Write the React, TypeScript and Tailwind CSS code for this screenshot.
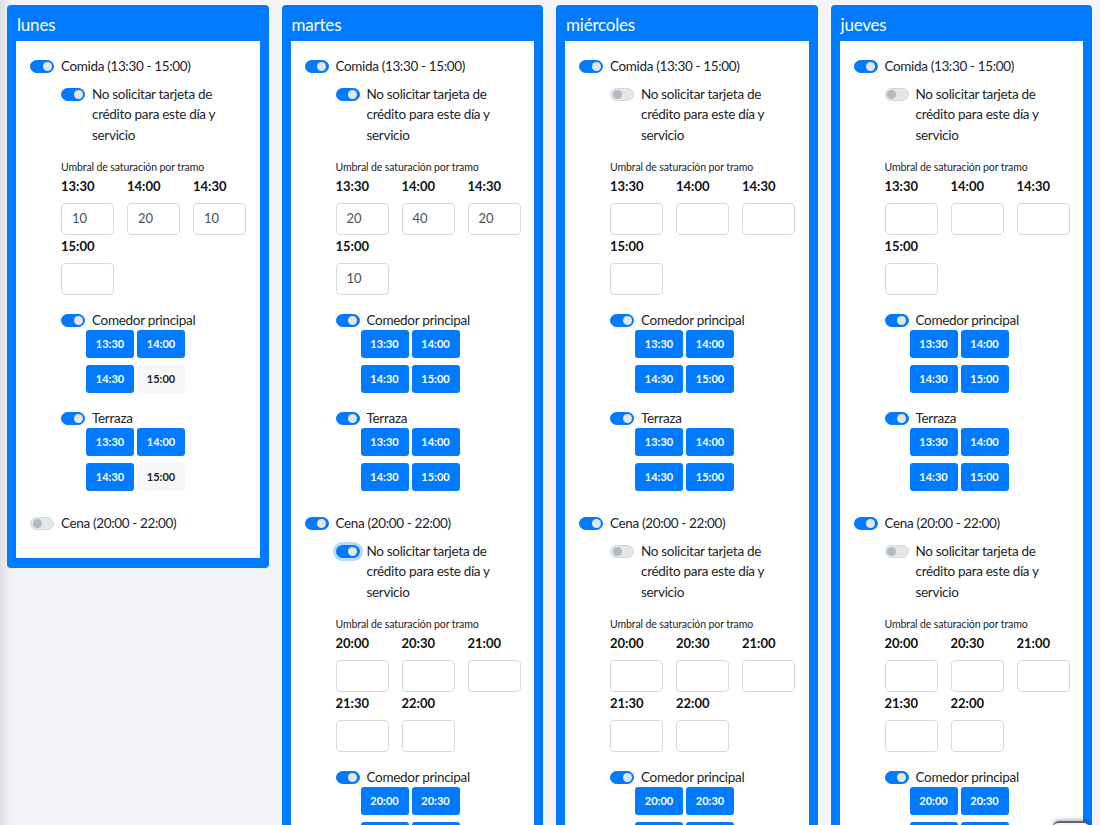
import React from "react";

type Svc = {
  name: string;
  on: boolean;
  noCard?: boolean;
  focus?: boolean;
  slots: string[];
  values: string[];
  areas: { name: string; on: boolean[] }[];
};

type Day = { name: string; services: Svc[] };

const lunchSlots = ["13:30", "14:00", "14:30", "15:00"];
const dinnerSlots = ["20:00", "20:30", "21:00", "21:30", "22:00"];

const days: Day[] = [
  {
    name: "lunes",
    services: [
      {
        name: "Comida (13:30 - 15:00)",
        on: true,
        noCard: true,
        slots: lunchSlots,
        values: ["10", "20", "10", ""],
        areas: [
          { name: "Comedor principal", on: [true, true, true, false] },
          { name: "Terraza", on: [true, true, true, false] },
        ],
      },
      { name: "Cena (20:00 - 22:00)", on: false, slots: dinnerSlots, values: [], areas: [] },
    ],
  },
  {
    name: "martes",
    services: [
      {
        name: "Comida (13:30 - 15:00)",
        on: true,
        noCard: true,
        slots: lunchSlots,
        values: ["20", "40", "20", "10"],
        areas: [
          { name: "Comedor principal", on: [true, true, true, true] },
          { name: "Terraza", on: [true, true, true, true] },
        ],
      },
      {
        name: "Cena (20:00 - 22:00)",
        on: true,
        noCard: true,
        focus: true,
        slots: dinnerSlots,
        values: ["", "", "", "", ""],
        areas: [
          { name: "Comedor principal", on: [true, true, true, true, true] },
          { name: "Terraza", on: [true, true, true, true, true] },
        ],
      },
    ],
  },
  {
    name: "miércoles",
    services: [
      {
        name: "Comida (13:30 - 15:00)",
        on: true,
        noCard: false,
        slots: lunchSlots,
        values: ["", "", "", ""],
        areas: [
          { name: "Comedor principal", on: [true, true, true, true] },
          { name: "Terraza", on: [true, true, true, true] },
        ],
      },
      {
        name: "Cena (20:00 - 22:00)",
        on: true,
        noCard: false,
        slots: dinnerSlots,
        values: ["", "", "", "", ""],
        areas: [
          { name: "Comedor principal", on: [true, true, true, true, true] },
          { name: "Terraza", on: [true, true, true, true, true] },
        ],
      },
    ],
  },
  {
    name: "jueves",
    services: [
      {
        name: "Comida (13:30 - 15:00)",
        on: true,
        noCard: false,
        slots: lunchSlots,
        values: ["", "", "", ""],
        areas: [
          { name: "Comedor principal", on: [true, true, true, true] },
          { name: "Terraza", on: [true, true, true, true] },
        ],
      },
      {
        name: "Cena (20:00 - 22:00)",
        on: true,
        noCard: false,
        slots: dinnerSlots,
        values: ["", "", "", "", ""],
        areas: [
          { name: "Comedor principal", on: [true, true, true, true, true] },
          { name: "Terraza", on: [true, true, true, true, true] },
        ],
      },
    ],
  },
];

function Toggle({ on, focus }: { on: boolean; focus?: boolean }) {
  return (
    <span
      className={
        "flex items-center w-[24px] h-[13px] rounded-full shrink-0 px-[1.5px] border " +
        (on
          ? "bg-[#007bff] border-[#007bff] justify-end"
          : "bg-[#e4e7ea] border-[#d3d8dd] justify-start") +
        (focus ? " ring-[3px] ring-[#b8d9ff]" : "")
      }
    >
      <span
        className={
          "block w-[9px] h-[9px] rounded-full " + (on ? "bg-[#e3e5e8]" : "bg-[#b3bac1]")
        }
      />
    </span>
  );
}

function ServiceBlock({ s, first }: { s: Svc; first: boolean }) {
  return (
    <div className={first ? "" : "mt-[22px]"}>
      <div className="flex items-center h-[20px] gap-[7px]">
        <Toggle on={s.on} />
        <span className="text-[13.5px] tracking-[-0.35px] text-[#212529]">{s.name}</span>
      </div>
      {s.on && (
        <div className="ml-[31px] w-[185px]">
          <div className="flex gap-[7px] mt-[7.5px]">
            <div className="mt-[4px]">
              <Toggle on={!!s.noCard} focus={s.focus} />
            </div>
            <span className="text-[13.5px] tracking-[-0.3px] leading-[20.5px] text-[#212529]">
              No solicitar tarjeta de
              <br />
              crédito para este día y
              <br />
              servicio
            </span>
          </div>
          <div className="mt-[15px] text-[10.5px] tracking-[-0.1px] leading-[14px] text-[#212529]">
            Umbral de saturación por tramo
          </div>
          <div className="grid grid-cols-3 gap-x-[13px] gap-y-[2.5px] mt-[3.5px]">
            {s.slots.map((t, i) => (
              <div key={t}>
                <div className="text-[13px] font-bold leading-[17px] text-[#111]">{t}</div>
                <div className="mt-[8.5px] h-[32px] w-[53px] border border-[#d6dadf] rounded-[4px] bg-white flex items-center px-[10px] text-[13px] text-[#4a5259]">
                  {s.values[i]}
                </div>
              </div>
            ))}
          </div>
          {s.areas.map((a) => (
            <div key={a.name} className="mt-[15px]">
              <div className="flex items-center h-[20px] gap-[7px]">
                <Toggle on={true} />
                <span className="text-[13.5px] tracking-[-0.3px] text-[#212529]">{a.name}</span>
              </div>
              <div className="ml-[25px] grid grid-cols-[48px_48px] gap-x-[3px] gap-y-[7px]">
                {s.slots.map((t, i) => (
                  <div
                    key={t}
                    className={
                      "h-[28px] rounded-[3px] flex items-center justify-center text-[11px] font-bold " +
                      (a.on[i] ? "bg-[#007bff] text-white" : "bg-[#f6f7f9] text-[#212529]")
                    }
                  >
                    {t}
                  </div>
                ))}
              </div>
            </div>
          ))}
        </div>
      )}
    </div>
  );
}

function DayCard({ d }: { d: Day }) {
  return (
    <div className="w-[261.5px] shrink-0 bg-[#007bff] rounded-[4px] px-[9px] pb-[10px]">
      <div className="h-[36px] flex items-center pt-[3px] px-[1px] text-[17px] tracking-[-0.2px] text-white">{d.name}</div>
      <div className="bg-white pt-[15px] pb-[25px] px-[14px]">
        {d.services.map((s, i) => (
          <ServiceBlock key={i} s={s} first={i === 0} />
        ))}
      </div>
    </div>
  );
}

export default function App() {
  return (
    <div
      className="relative w-[1100px] h-[825px] overflow-hidden bg-[#f4f5f9] shadow-[inset_14px_0_12px_-10px_rgba(0,0,0,0.12)]"
      style={{ fontFamily: "Lato, 'Liberation Sans', sans-serif" }}
    >
      <div className="flex items-start gap-[13px] pl-[7px] pt-[5px]">
        {days.map((d) => (
          <DayCard key={d.name} d={d} />
        ))}
      </div>
      <div className="absolute left-[1053px] top-[821px] w-[36px] h-[20px] rounded-[6px] bg-[#f4f5f9] border-t-2 border-[#1f2937]/70 shadow-[0_-1px_4px_rgba(0,0,0,0.35)]" />
    </div>
  );
}
